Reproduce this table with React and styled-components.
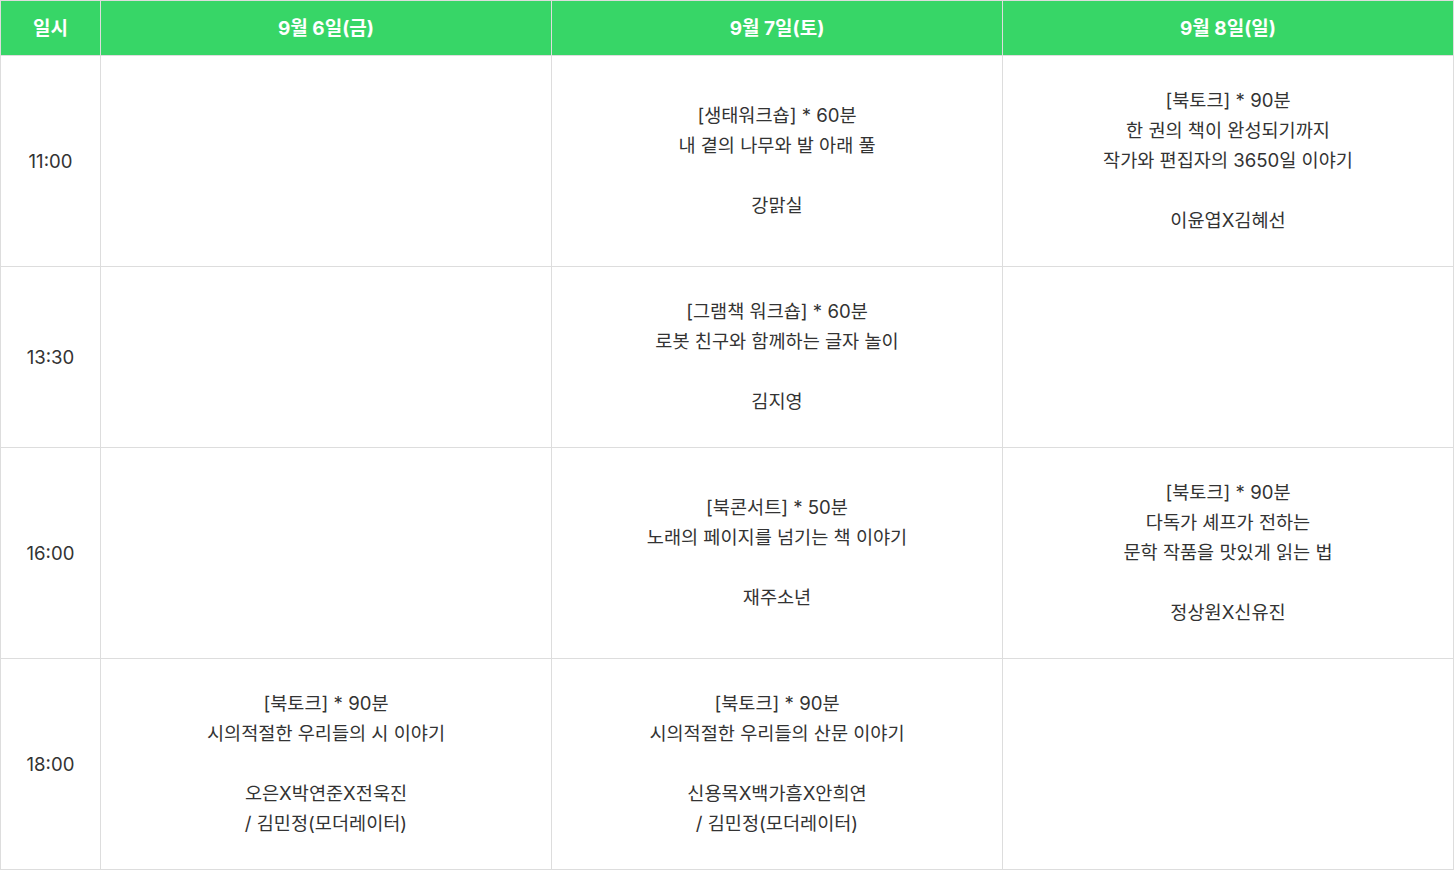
import React from "react";
import styled, { createGlobalStyle } from "styled-components";

const GlobalStyle = createGlobalStyle`
  html, body {
    margin: 0;
    padding: 0;
    background: #fff;
  }
  body {
    font-family: Inter, "Noto Sans CJK KR", sans-serif;
  }
`;

const Table = styled.table`
  width: 1454px;
  table-layout: fixed;
  border-collapse: collapse;
  font-size: 18.6px;
  line-height: 30px;
  color: #333;
`;

const Col = styled.col`
  width: ${(p) => (p.$time ? 100 : 451)}px;
`;

const HeadCell = styled.th`
  box-sizing: border-box;
  height: 55px;
  padding: 1px 0 0;
  background: #37d667;
  color: #fff;
  font-weight: 700;
  font-size: 19px;
  text-align: center;
  border: 1px solid #ddd;
`;

const TimeCell = styled.td`
  padding: 30px 0;
  text-align: center;
  border: 1px solid #ddd;
  height: ${(p) => p.$h}px;
  box-sizing: border-box;
`;

const Cell = styled.td`
  padding: 29px 0 31px;
  text-align: center;
  vertical-align: middle;
  border: 1px solid #ddd;
`;

const Line = styled.div`
  min-height: 30px;
  white-space: nowrap;
`;

const days = ["9월 6일(금)", "9월 7일(토)", "9월 8일(일)"];

const rows = [
  {
    time: "11:00",
    h: 211,
    cells: [
      null,
      ["[생태워크숍] * 60분", "내 곁의 나무와 발 아래 풀", "", "강맑실"],
      [
        "[북토크] * 90분",
        "한 권의 책이 완성되기까지",
        "작가와 편집자의 3650일 이야기",
        "",
        "이윤엽X김혜선",
      ],
    ],
  },
  {
    time: "13:30",
    h: 181,
    cells: [
      null,
      ["[그램책 워크숍] * 60분", "로봇 친구와 함께하는 글자 놀이", "", "김지영"],
      null,
    ],
  },
  {
    time: "16:00",
    h: 211,
    cells: [
      null,
      ["[북콘서트] * 50분", "노래의 페이지를 넘기는 책 이야기", "", "재주소년"],
      [
        "[북토크] * 90분",
        "다독가 셰프가 전하는",
        "문학 작품을 맛있게 읽는 법",
        "",
        "정상원X신유진",
      ],
    ],
  },
  {
    time: "18:00",
    h: 211,
    cells: [
      [
        "[북토크] * 90분",
        "시의적절한 우리들의 시 이야기",
        "",
        "오은X박연준X전욱진",
        "/ 김민정(모더레이터)",
      ],
      [
        "[북토크] * 90분",
        "시의적절한 우리들의 산문 이야기",
        "",
        "신용목X백가흠X안희연",
        "/ 김민정(모더레이터)",
      ],
      null,
    ],
  },
];

export default function App() {
  return (
    <>
      <GlobalStyle />
      <Table>
        <colgroup>
          <Col $time />
          <Col />
          <Col />
          <Col />
        </colgroup>
        <thead>
          <tr>
            <HeadCell>일시</HeadCell>
            {days.map((d) => (
              <HeadCell key={d}>{d}</HeadCell>
            ))}
          </tr>
        </thead>
        <tbody>
          {rows.map((r) => (
            <tr key={r.time}>
              <TimeCell $h={r.h}>{r.time}</TimeCell>
              {r.cells.map((c, i) => (
                <Cell key={i}>
                  {c && c.map((l, j) => <Line key={j}>{l}</Line>)}
                </Cell>
              ))}
            </tr>
          ))}
        </tbody>
      </Table>
    </>
  );
}
